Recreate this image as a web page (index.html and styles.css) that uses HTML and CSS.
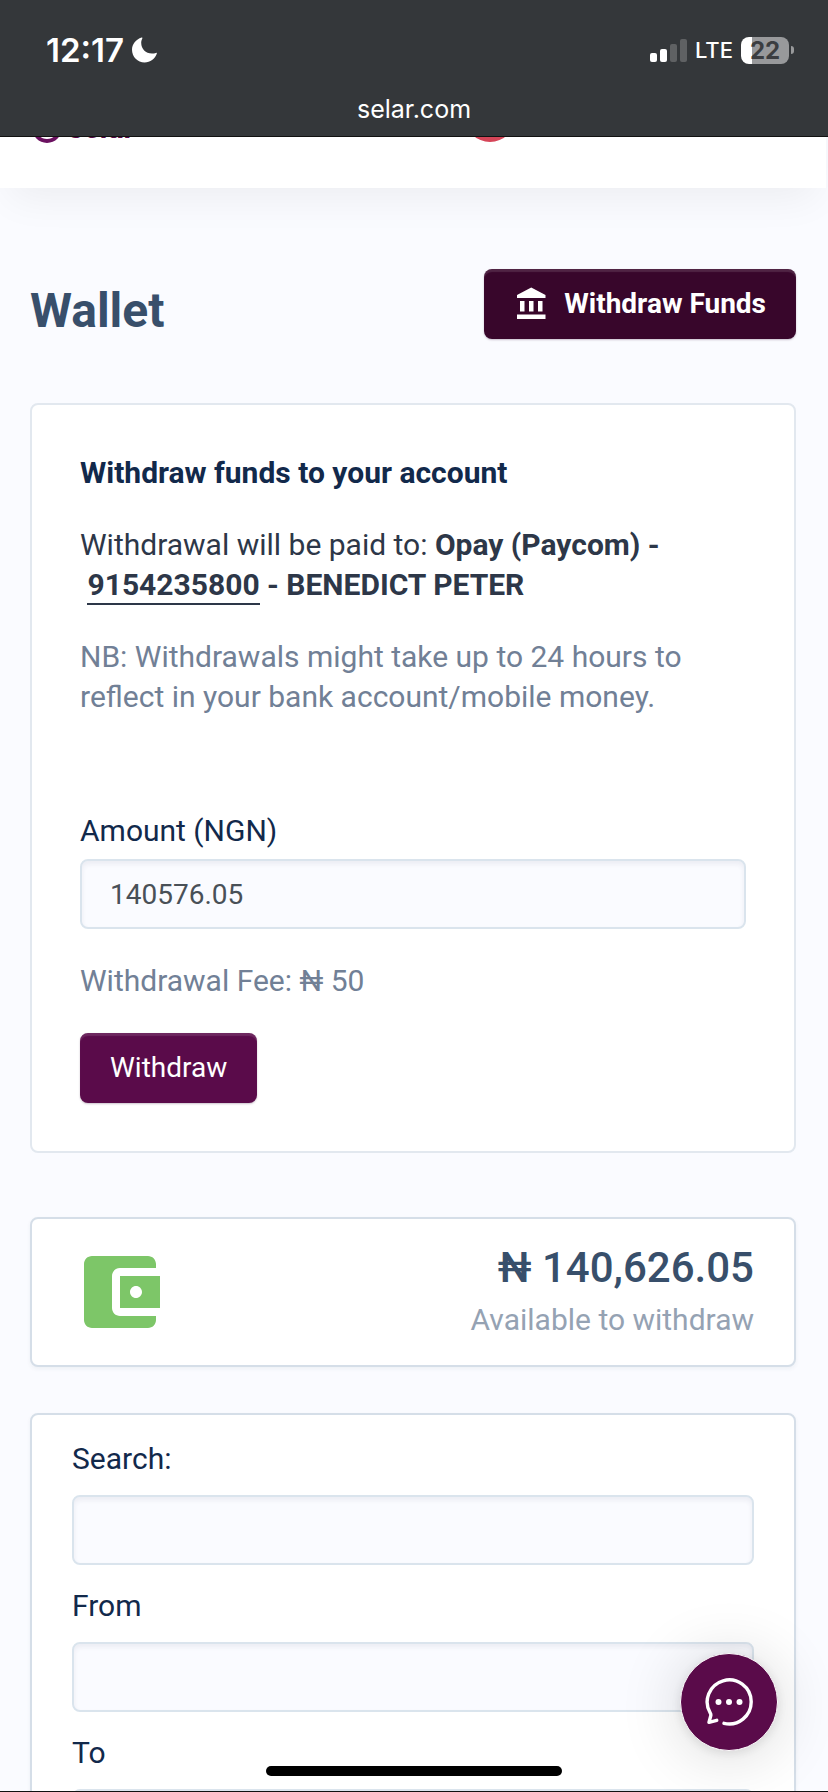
FILE: index.html
```html
<!DOCTYPE html>
<html lang="en">
<head>
<meta charset="utf-8">
<meta name="viewport" content="width=device-width, initial-scale=1">
<title>Wallet</title>
<link rel="stylesheet" href="styles.css">
</head>
<body>
<div class="browser-bar">
  <div class="status">
    <div class="status-side">
      <span class="clock">12:17</span>
      <svg class="moon" viewBox="0 0 25 26" aria-hidden="true"><path fill="#fff" d="M9.6.5C3.900 2.400 0 7.200 0 12.800C0 19.900 5.600 25.500 12.600 25.500C18.200 25.500 23 22 24.800 16.800C25 16.200 24.500 15.700 23.900 15.900C22.700 16.300 21.300 16.500 20 16.500C13.600 16.500 9.200 12 9.200 5.800C9.200 4.300 9.700 2.700 10.300 1.500C10.600.9 10.200.300 9.600.5Z"/></svg>
    </div>
    <div class="status-side">
      <svg class="signal" viewBox="0 0 37 23" aria-hidden="true"><rect y="14" width="7" height="9" rx="2" fill="#fff"/><rect x="10" y="10" width="7" height="13" rx="2" fill="#fff"/><rect x="20" y="5" width="7" height="18" rx="2" fill="#5f6163"/><rect x="30" width="7" height="23" rx="2" fill="#5f6163"/></svg>
      <span class="network">LTE</span>
      <span class="battery"><span class="battery-cell">22</span><span class="battery-tip"></span></span>
    </div>
  </div>
  <div class="address">selar.com</div>
</div>

<div class="page">
  <header class="site-header">
    <div class="logo">
      <svg class="logo-ring" viewBox="0 0 30 30" aria-hidden="true"><circle cx="15" cy="15" r="13" fill="none" stroke="#6b1160" stroke-width="4"/></svg>
      <span>selar</span>
    </div>
    <span class="alert-dot"></span>
  </header>

  <main class="content">
    <div class="title-row">
      <h1>Wallet</h1>
      <button class="btn btn-dark" type="button">
        <svg class="bank" viewBox="0 0 24 24" aria-hidden="true"><path fill="#fff" d="M4 10v7h3v-7H4zm6 0v7h3v-7h-3zM2 22h19v-3H2v3zm14-12v7h3v-7h-3zm-4.500-9L2 6v2h19V6l-9.500-5z"/></svg>
        Withdraw Funds
      </button>
    </div>

    <form class="card withdraw-card">
      <h2>Withdraw funds to your account</h2>
      <p>Withdrawal will be paid to: <strong>Opay (Paycom) - &nbsp;<a href="#">9154235800</a> - BENEDICT PETER</strong></p>
      <p class="muted">NB: Withdrawals might take up to 24 hours to reflect in your bank account/mobile money.</p>
      <label class="amount-label" for="amount">Amount (NGN)</label>
      <input id="amount" type="text" value="140576.05">
      <p class="muted">Withdrawal Fee: ₦ 50</p>
      <button class="btn" type="button">Withdraw</button>
    </form>

    <section class="card balance-card">
      <svg class="wallet" viewBox="0 0 24 24" aria-hidden="true"><path fill="#7dc668" d="M21 18v1c0 1.100-.9 2-2 2H5c-1.110 0-2-.9-2-2V5c0-1.100.89-2 2-2h14c1.100 0 2 .9 2 2v1h-9c-1.110 0-2 .9-2 2v8c0 1.100.89 2 2 2h9zm-9-2h10V8H12v8zm4-2.500c-.83 0-1.500-.67-1.500-1.500s.67-1.500 1.500-1.500 1.500.67 1.500 1.500-.67 1.500-1.500 1.500z"/></svg>
      <div class="balance">
        <div class="balance-value">₦ 140,626.05</div>
        <div class="balance-note">Available to withdraw</div>
      </div>
    </section>

    <form class="card filter-card">
      <div class="field"><label for="search">Search:</label><input id="search" type="text"></div>
      <div class="field"><label for="from">From</label><input id="from" type="text"></div>
      <div class="field"><label for="to">To</label><input id="to" type="text"></div>
    </form>
  </main>
</div>

<button class="chat" type="button" aria-label="Open chat">
  <svg viewBox="0 0 48 48" aria-hidden="true"><path fill="none" stroke="#fff" stroke-width="3.400" stroke-linecap="round" stroke-linejoin="round" d="M19 45.300A22 22 0 1 0 5.300 35.200C5.900 36.200 6 37 5.700 38L4 44.300L11.700 42.300"/><g fill="#fff"><circle cx="13.500" cy="24" r="3"/><circle cx="24" cy="24" r="3"/><circle cx="34.500" cy="24" r="3"/></g></svg>
</button>
<div class="home-indicator"></div>
</body>
</html>
```

FILE: styles.css
```css
* { box-sizing: border-box; }

body {
  margin: 0;
  height: 100vh;
  display: flex;
  flex-direction: column;
  overflow: hidden;
  background: #fafbff;
  border-bottom: 1px solid #111;
  color: #2d3748;
  font: 400 30px/40px Roboto, "Liberation Sans", sans-serif;
}

h1, h2, p { margin: 0; }

/* Browser chrome */
.browser-bar {
  position: relative;
  z-index: 2;
  flex: none;
  background: #34373a;
  border-bottom: 1px solid #111;
  color: #fff;
  font-family: Inter, sans-serif;
}
.status {
  display: flex;
  justify-content: space-between;
  padding: 30px 34px 0 46px;
}
.status-side { display: flex; align-items: center; height: 40px; gap: 8px; }
.clock { font-size: 33px; font-weight: 600; }
.moon { width: 25px; height: 26px; }
.signal { width: 37px; height: 23px; }
.network { font-size: 22px; font-weight: 500; }
.battery { display: flex; align-items: center; gap: 2px; }
.battery-cell {
  width: 48px;
  border-radius: 8px;
  background: linear-gradient(90deg, #fff 11px, #98999b 11px);
  color: #3b3d40;
  font-size: 24px;
  font-weight: 700;
  line-height: 27px;
  text-align: center;
}
.battery-tip { width: 3px; height: 8px; border-radius: 0 4px 4px 0; background: #98999b; }
.address { padding: 19px 0 7px; font-size: 25px; text-align: center; }

/* Site */
.page { flex: 1; min-height: 0; }
.site-header {
  display: grid;
  grid-template-columns: 56% 1fr;
  align-items: center;
  height: 142px;
  margin: -91px 2px 0 0;
  padding-left: 32px;
  background: #fff;
  box-shadow: 0 20px 40px -10px rgba(0, 0, 0, .06);
}
.logo {
  display: flex;
  align-items: center;
  gap: 6px;
  padding-top: 22px;
  color: #5a0b4a;
  font-size: 30px;
  font-weight: 700;
}
.logo-ring { width: 30px; height: 30px; }
.alert-dot { width: 50px; height: 50px; margin-left: -12px; border-radius: 50%; background: #d64558; }

.content { padding: 81px 32px 0 30px; }
.title-row {
  display: flex;
  justify-content: space-between;
  align-items: flex-end;
  margin-bottom: 64px;
}
h1 { color: #384f6b; font-size: 48px; font-weight: 700; line-height: 56px; }

.btn {
  display: flex;
  align-items: center;
  gap: 14px;
  height: 70px;
  padding: 0 30px;
  border: 0;
  border-radius: 8px;
  background: #5a0b4a;
  box-shadow: inset 0 3px 1px rgba(255, 255, 255, .12), 0 1px 2px rgba(50, 10, 50, .25);
  color: #fff;
  font: inherit;
  font-size: 28px;
}
.btn-dark { background: #38062b; font-weight: 700; }
.bank { width: 36px; height: 36px; }

.card {
  border: 2px solid #d5dee8;
  border-radius: 8px;
  background: #fff;
  box-shadow: 0 2px 4px rgba(30, 60, 90, .06);
}
.withdraw-card { padding: 48px; margin-bottom: 64px; border-color: #e2e8ef; box-shadow: none; }
.withdraw-card p { margin-bottom: 32px; }
h2 { margin-bottom: 32px; color: #12294b; font-size: 30px; font-weight: 700; line-height: 40px; }
strong { font-weight: 700; }
a { padding-bottom: 1px; border-bottom: 2px solid; color: inherit; text-decoration: none; }
.muted { color: #718096; }
label { display: block; color: #12294b; }
.amount-label { margin: 94px 0 8px; }

input {
  display: block;
  width: 100%;
  height: 70px;
  padding: 0 28px;
  border: 2px solid #dae4ed;
  border-radius: 8px;
  background: #fafbff;
  box-shadow: inset 0 3px 5px rgba(40, 40, 80, .07);
  color: #495057;
  font: inherit;
  font-size: 28px;
}
#amount { margin-bottom: 32px; }

.balance-card {
  display: flex;
  justify-content: space-between;
  align-items: center;
  margin-bottom: 46px;
  padding: 25px 40px;
}
.wallet { width: 96px; height: 96px; }
.balance { text-align: right; }
.balance-value { margin-bottom: 8px; color: #384f6b; font-size: 42px; font-weight: 500; line-height: 48px; }
.balance-note { color: #95a2b3; }

.filter-card { padding: 24px 40px; }
.field { margin-bottom: 21px; }
.field label { margin-bottom: 16px; }

/* Floating layer */
.chat {
  position: fixed;
  right: 50px;
  bottom: 41px;
  z-index: 3;
  display: grid;
  place-items: center;
  width: 98px;
  height: 98px;
  padding: 0;
  border: 1px solid #fff;
  border-radius: 50%;
  background: #5a0b4a;
  box-shadow: 0 2px 12px rgba(0, 0, 0, .1), 0 4px 64px rgba(0, 0, 0, .16);
}
.chat svg { width: 48px; height: 48px; }
.home-indicator {
  position: fixed;
  left: 50%;
  bottom: 16px;
  z-index: 4;
  width: 296px;
  height: 10px;
  margin-left: -148px;
  border-radius: 5px;
  background: #000;
}
```
